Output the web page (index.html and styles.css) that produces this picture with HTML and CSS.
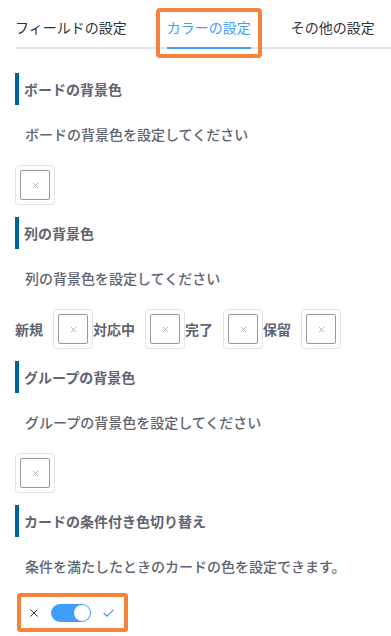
FILE: index.html
```html
<!DOCTYPE html>
<html lang="ja">
<head>
<meta charset="utf-8">
<link rel="stylesheet" href="styles.css">
</head>
<body>
<div class="page">
  <div class="tabs">
    <div class="tab first"><span class="tab-label">フィールドの設定</span></div>
    <div class="tab active"><span class="tab-label">カラーの設定</span><span class="annot"></span></div>
    <div class="tab"><span class="tab-label">その他の設定</span></div>
  </div>

  <div class="section">
    <div class="heading">ボードの背景色</div>
    <p class="desc">ボードの背景色を設定してください</p>
    <div class="picker-row">
      <div class="picker"><div class="picker-box"><svg class="x" viewBox="0 0 8 8"><path d="M1 1L7 7M7 1L1 7"/></svg></div></div>
    </div>
  </div>

  <div class="section">
    <div class="heading">列の背景色</div>
    <p class="desc">列の背景色を設定してください</p>
    <div class="picker-row">
      <span class="label">新規</span>
      <div class="picker"><div class="picker-box"><svg class="x" viewBox="0 0 8 8"><path d="M1 1L7 7M7 1L1 7"/></svg></div></div>
      <span class="label">対応中</span>
      <div class="picker"><div class="picker-box"><svg class="x" viewBox="0 0 8 8"><path d="M1 1L7 7M7 1L1 7"/></svg></div></div>
      <span class="label">完了</span>
      <div class="picker"><div class="picker-box"><svg class="x" viewBox="0 0 8 8"><path d="M1 1L7 7M7 1L1 7"/></svg></div></div>
      <span class="label">保留</span>
      <div class="picker"><div class="picker-box"><svg class="x" viewBox="0 0 8 8"><path d="M1 1L7 7M7 1L1 7"/></svg></div></div>
    </div>
  </div>

  <div class="section">
    <div class="heading">グループの背景色</div>
    <p class="desc">グループの背景色を設定してください</p>
    <div class="picker-row">
      <div class="picker"><div class="picker-box"><svg class="x" viewBox="0 0 8 8"><path d="M1 1L7 7M7 1L1 7"/></svg></div></div>
    </div>
  </div>

  <div class="section">
    <div class="heading">カードの条件付き色切り替え</div>
    <p class="desc last">条件を満たしたときのカードの色を設定できます。</p>
    <div class="switch-row">
      <svg class="sw-x" viewBox="0 0 9 9"><path d="M0.5 0.5L8.5 8.5M8.5 0.5L0.5 8.5"/></svg>
      <span class="switch"><span class="knob"></span></span>
      <svg class="sw-check" viewBox="0 0 11 8"><path d="M0.6 4L4 7.2L10.4 0.8"/></svg>
    </div>
  </div>
</div>
</body>
</html>
```

FILE: styles.css
```css
html, body {
  margin: 0;
  padding: 0;
  background: #ffffff;
}

.page {
  padding: 7px 0 0 15px;
  font-family: "Noto Sans CJK JP", "Noto Sans", sans-serif;
  font-size: 14px;
  color: #606266;
}

.tabs {
  display: flex;
  height: 40px;
  border-bottom: 2px solid #e4e7ed;
  margin-bottom: 24px;
  overflow: visible;
}

.tab {
  position: relative;
  flex: none;
  white-space: nowrap;
  padding: 0 20px;
  height: 40px;
  color: #303133;
  font-size: 14px;
}

.tab.first {
  padding-left: 0;
}

.tab-label {
  display: block;
  line-height: 40px;
  height: 40px;
}

.tab.active {
  color: #409eff;
}

.tab.active .tab-label {
  border-bottom: 2px solid #409eff;
}

.annot {
  position: absolute;
  left: 9px;
  right: 9px;
  top: 1px;
  bottom: -11px;
  border: 4px solid #f5833c;
  border-radius: 4px;
}

.section {
  display: flex;
  flex-direction: column;
}

.heading {
  height: 32px;
  border-left: 4px solid #00629b;
  padding-left: 5px;
  display: flex;
  align-items: center;
  font-weight: bold;
  color: #5f6470;
}

.desc {
  margin: 19px 0 21px;
  padding-left: 10px;
  line-height: 20px;
  font-weight: 500;
  color: #5f6470;
}

.desc.last {
  margin-bottom: 17px;
}

.picker-row {
  display: flex;
  align-items: center;
  margin-bottom: 12px;
}

.label {
  font-weight: bold;
  margin-right: 10px;
  color: #5f6470;
}

.picker {
  width: 40px;
  height: 40px;
  box-sizing: border-box;
  border: 1px solid #e2e2ea;
  border-radius: 4px;
  padding: 4px;
  flex: none;
}

.picker-box {
  height: 100%;
  box-sizing: border-box;
  border: 1px solid #999999;
  border-radius: 2px;
  display: flex;
  align-items: center;
  justify-content: center;
}

.x {
  width: 7px;
  height: 7px;
  fill: none;
  stroke: #aaaaaa;
  stroke-width: 1;
}

.switch-row {
  display: flex;
  align-items: center;
  align-self: flex-start;
  margin-left: 2px;
  height: 39px;
  box-sizing: border-box;
  border: 4px solid #f5833c;
  border-radius: 3px;
  padding: 0 9.5px 0 9px;
}

.sw-x {
  width: 8px;
  height: 8px;
  fill: none;
  stroke: #303133;
  stroke-width: 1.1;
}

.switch {
  display: flex;
  align-items: center;
  justify-content: flex-end;
  width: 40px;
  height: 18px;
  box-sizing: border-box;
  padding: 1px;
  border-radius: 10px;
  background: #409eff;
  margin: 0 12px 0 13px;
}

.knob {
  width: 16px;
  height: 16px;
  border-radius: 50%;
  background: #ffffff;
}

.sw-check {
  width: 11px;
  height: 8px;
  fill: none;
  stroke: #409eff;
  stroke-width: 1.2;
}
```
